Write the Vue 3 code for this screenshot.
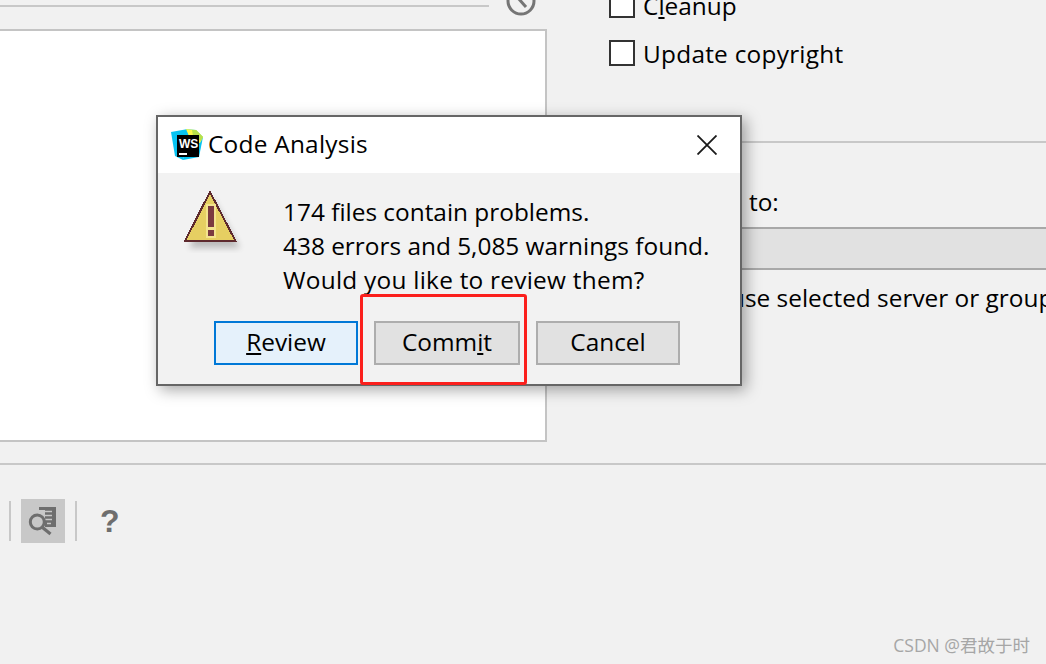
<template>
  <div class="page">
    <div class="main">
      <div class="left">
        <div class="top-row">
          <div class="top-line"></div>
          <svg class="clock" width="32" height="18" viewBox="0 0 32 18" fill="none">
            <circle cx="16" cy="1" r="13" stroke="#757575" stroke-width="3" />
            <path d="M13 -2L21 7" stroke="#757575" stroke-width="3" />
          </svg>
        </div>
        <div class="panel"></div>
      </div>

      <div class="right">
        <label class="check-row">
          <span class="box"></span>
          <span class="cleanup">C<u>l</u>eanup</span>
        </label>
        <label class="check-row">
          <span class="box"></span>
          <span class="wide">Update copyright</span>
        </label>
        <div class="right-line"></div>
        <div class="to-label">to:</div>
        <div class="grey-input"></div>
        <div class="use-label">use selected server or group</div>
      </div>
    </div>

    <div class="toolbar">
      <span class="sep"></span>
      <button class="tool-btn">
        <svg width="30" height="30" viewBox="0 0 30 30" fill="none">
          <path d="M11 1H28V21H17V4H11Z" fill="#6e6e6e" />
          <path d="M17 5.5H24M17 9.5H24M17 13.5H24M19 17.5H23" stroke="#c8c8c8" stroke-width="1.4" />
          <circle cx="9.3" cy="16" r="7" stroke="#6e6e6e" stroke-width="3" fill="#c8c8c8" />
          <path d="M14.5 21.5L22.5 28" stroke="#6e6e6e" stroke-width="3.2" />
        </svg>
      </button>
      <span class="sep"></span>
      <span class="help">?</span>
    </div>

    <div class="dialog">
      <div class="title-bar">
        <svg class="ws-logo" width="32" height="33" viewBox="0 0 32 33">
          <path d="M0 3L17 0L12 31L4 27Z" fill="#07c3f2" />
          <path d="M15 0L25 1L32 8L28 28L12 31Z" fill="#07c3f2" />
          <path d="M15 0L25 1L32 8L29 14L20 12Z" fill="#fcf84a" />
          <path d="M21 1L25 1L32 8L30 12L22 7Z" fill="#b8e04a" />
          <path d="M6 6H28V28H6Z" fill="#000" />
          <text x="8" y="19" class="ws-text">WS</text>
          <path d="M8 24H16V26H8Z" fill="#fff" />
        </svg>
        <span class="title wide">Code Analysis</span>
        <svg class="close" width="20" height="20" viewBox="0 0 20 20" fill="none">
          <path d="M0.5 0.5L19.5 19.5M19.5 0.5L0.5 19.5" stroke="#1a1a1a" stroke-width="1.8" />
        </svg>
      </div>
      <div class="body">
        <div class="message-row">
          <svg class="warn" width="62" height="62" viewBox="0 0 62 62">
            <defs>
              <filter id="warnShadow" x="-20%" y="-20%" width="150%" height="150%">
                <feGaussianBlur stdDeviation="3" />
              </filter>
            </defs>
            <path d="M28 6L56 57H5Z" fill="#000" opacity="0.22" filter="url(#warnShadow)" />
            <path d="M26 1L51.5 50H1Z" fill="#e6cf62" stroke="#5e2a2e" stroke-width="2" shape-rendering="crispEdges" />
            <path d="M22 13H32V47H22Z" fill="#f3e38e" shape-rendering="crispEdges" />
            <path d="M24 15H30V36H24ZM24 39H30V45H24Z" fill="#7b3a40" shape-rendering="crispEdges" />
          </svg>
          <div class="message">
            <div>174 files contain problems.</div>
            <div>438 errors and 5,085 warnings found.</div>
            <div class="last-line">Would you like to review them?</div>
          </div>
        </div>
        <div class="buttons">
          <button class="btn primary"><u>R</u>eview</button>
          <button class="btn commit">Comm<u>i</u>t</button>
          <button class="btn">Cancel</button>
        </div>
      </div>
    </div>

    <div class="highlight"></div>
    <div class="watermark">CSDN @君故于时</div>
  </div>
</template>

<script setup>
</script>

<style>
html, body {
  margin: 0;
  background: #f1f1f1;
  overflow: hidden;
}
</style>

<style scoped>
.page {
  position: relative;
  width: 1046px;
  height: 664px;
  overflow: hidden;
  background: #f1f1f1;
  font-family: "Open Sans", "Noto Sans", "Noto Sans CJK SC", sans-serif;
  font-size: 24.4px;
  color: #000;
}

.wide {
  letter-spacing: 0.25px;
}

.main {
  display: grid;
  grid-template-columns: 547px 1fr;
  height: 463px;
  border-bottom: 2px solid #c8c8c8;
}

.top-row {
  display: flex;
  height: 29px;
}

.top-line {
  width: 489px;
  height: 2px;
  margin-top: 5px;
  background: #c8c8c8;
}

.clock {
  margin-left: 16px;
}

.panel {
  height: 409px;
  background: #fff;
  border: 2px solid #c4c4c4;
  border-left: none;
}

.right {
  margin-top: -8px;
  min-width: 0;
}

.check-row {
  display: flex;
  align-items: center;
  gap: 8px;
  height: 26px;
  margin: 0 0 22px 62px;
  white-space: nowrap;
}

.box {
  width: 22px;
  height: 22px;
  border: 2px solid #333;
  background: #fff;
}

.right-line {
  height: 2px;
  margin-top: 75px;
  background: #c8c8c8;
}

.to-label {
  margin: 42px 0 0 202px;
  line-height: 34px;
}

.grey-input {
  height: 39px;
  margin-top: 8px;
  background: #e1e1e1;
  border-top: 2px solid #a8a8a8;
  border-bottom: 2px solid #a8a8a8;
}

.use-label {
  margin: 11px 0 0 183px;
  line-height: 34px;
  white-space: nowrap;
}

.toolbar {
  display: flex;
  align-items: center;
  gap: 10px;
  height: 44px;
  margin-top: 34px;
  padding-left: 9px;
}

.sep {
  width: 2px;
  height: 40px;
  background: #c8c8c8;
}

.tool-btn {
  display: flex;
  align-items: center;
  justify-content: center;
  width: 44px;
  height: 44px;
  padding: 0;
  border: none;
  background: #c8c8c8;
}

.help {
  margin-left: 13px;
  font-family: "Liberation Sans", sans-serif;
  font-size: 32px;
  font-weight: 700;
  color: #6e6e6e;
}

.dialog {
  position: absolute;
  left: 156px;
  top: 115px;
  width: 582px;
  height: 267px;
  border: 2px solid #666;
  background: #f2f2f2;
  box-shadow: 4px 4px 14px rgba(0, 0, 0, 0.35);
}

.title-bar {
  display: flex;
  align-items: center;
  height: 56px;
  padding: 0 23px 0 13px;
  background: #fff;
}

.ws-logo {
  flex: none;
}

.ws-text {
  font-family: "Liberation Sans", sans-serif;
  font-size: 12px;
  font-weight: 700;
  fill: #fff;
}

.title {
  margin: -4px 0 0 5px;
  flex: 1;
}

.message-row {
  display: flex;
  padding: 18px 0 0 26px;
}

.warn {
  flex: none;
}

.message {
  margin: 4px 0 0 37px;
  line-height: 34px;
  white-space: nowrap;
}

.last-line {
  letter-spacing: 0.25px;
}

.buttons {
  display: flex;
  gap: 16px;
  margin: 24px 0 0 56px;
}

.btn {
  width: 144px;
  height: 44px;
  padding: 0 0 3px;
  border: 2px solid #adadad;
  background: #e1e1e1;
  font: inherit;
  color: #000;
}

.btn.commit {
  width: 146px;
}

.btn.primary {
  border-color: #0078d7;
  background: #e5f1fb;
}

.highlight {
  position: absolute;
  left: 360px;
  top: 294px;
  width: 161px;
  height: 85px;
  border: 3px solid #fb1f1c;
  border-radius: 3px;
}

.watermark {
  position: absolute;
  right: 16px;
  bottom: 7px;
  font-size: 17.5px;
  color: #a6a6a6;
  white-space: nowrap;
}
</style>
